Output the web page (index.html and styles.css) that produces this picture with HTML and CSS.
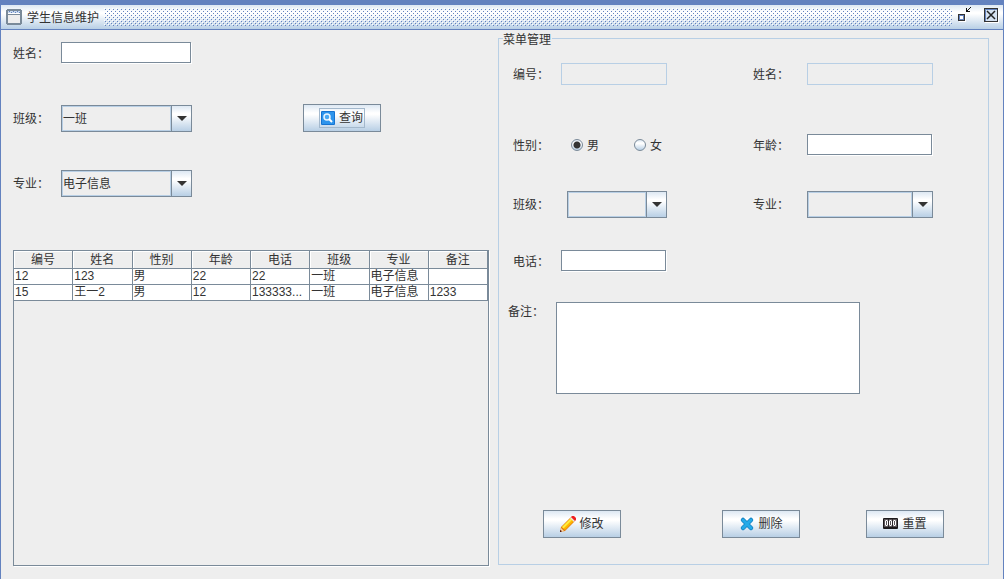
FILE: index.html
```html
<!DOCTYPE html>
<html lang="zh-CN">
<head>
<meta charset="utf-8">
<title>学生信息维护</title>
<link rel="stylesheet" href="styles.css">
</head>
<body>
<div class="window">
  <header class="titlebar">
    <svg class="frame-icon" width="16" height="16" viewBox="0 0 16 16" aria-hidden="true" shape-rendering="crispEdges">
      <path fill="#7a8a99" d="M1 0h14v1h1v14h-1v1H1v-1H0V1h1z"/>
      <path fill="#c8d9ee" d="M2 2h12v3H2z"/>
      <path fill="#6382bf" d="M3 2h1v1H3zM5 3h1v1H5zM7 2h1v1H7zM9 3h1v1H9zM11 2h1v1h-1zM13 3h1v1h-1z"/>
      <path fill="#fff" d="M2 4h12v1H2z"/>
      <path fill="#eee" d="M2 6h12v8H2z"/>
    </svg>
    <h1 class="title">学生信息维护</h1>
    <svg class="grip" width="100%" height="18" aria-hidden="true" shape-rendering="crispEdges">
      <defs>
        <pattern id="bumps" width="4" height="4" patternUnits="userSpaceOnUse">
          <path fill="#fff" d="M0 0h1v1H0zM2 2h1v1H2z"/>
          <path fill="#6382bf" d="M1 1h1v1H1zM3 3h1v1H3z"/>
        </pattern>
      </defs>
      <rect width="100%" height="18" fill="url(#bumps)"/>
    </svg>
    <button class="tool" type="button" aria-label="还原">
      <svg width="16" height="16" viewBox="0 0 16 16" shape-rendering="crispEdges">
        <path fill="#fff" d="M3 8h7v7H3z"/>
        <path fill="#333" d="M2 7h7v7H2z"/>
        <path fill="#6382bf" d="M3 8h5v5H3z"/>
        <path fill="#fff" d="M4 9h3v3H4z"/>
        <path fill="#111" d="M10 1h1v3h3v1h-4zM11 3h1v1h-1zM12 2h1v1h-1zM13 1h1v1h-1zM14 0h1v1h-1z"/>
      </svg>
    </button>
    <button class="tool" type="button" aria-label="关闭">
      <svg width="16" height="16" viewBox="0 0 16 16" shape-rendering="crispEdges">
        <path fill="#fff" d="M2 2h14v14H2z"/>
        <path fill="#333" d="M1 1h14v14H1z"/>
        <path fill="#6382bf" d="M2 2h12v12H2z"/>
        <path fill="#d5e2f0" d="M3 3h11v11H3z"/>
        <path stroke="#222" stroke-width="1.500" shape-rendering="auto" d="M4 4l8 8M12 4l-8 8"/>
      </svg>
    </button>
  </header>

  <main class="content">
    <section class="browse">
      <form class="filters">
        <label for="q-name">姓名：</label>
        <input class="text-field" id="q-name" type="text">
        <label class="second" for="q-class">班级：</label>
        <span class="combo"><select id="q-class"><option>一班</option></select></span>
        <button class="btn query" type="button"><span class="focus">
          <svg width="16" height="16" viewBox="0 0 16 16" aria-hidden="true">
            <rect x="1" y="1" width="14" height="14" rx="1" fill="#1673d1"/>
            <rect x="2" y="2" width="12" height="12" fill="#2d94ec"/>
            <circle cx="7" cy="7" r="3" fill="#4aa8f2" stroke="#e8f4ff" stroke-width="1.500"/>
            <path stroke="#fff" stroke-width="2" d="M9 9l3 3"/>
          </svg>查询</span></button>
        <label class="third" for="q-major">专业：</label>
        <span class="combo"><select id="q-major"><option>电子信息</option></select></span>
      </form>
      <div class="table-pane">
        <table>
          <thead>
            <tr><th>编号</th><th>姓名</th><th>性别</th><th>年龄</th><th>电话</th><th>班级</th><th>专业</th><th>备注</th></tr>
          </thead>
          <tbody>
            <tr><td>12</td><td>123</td><td>男</td><td>22</td><td>22</td><td>一班</td><td>电子信息</td><td></td></tr>
            <tr><td>15</td><td>王一2</td><td>男</td><td>12</td><td>133333...</td><td>一班</td><td>电子信息</td><td>1233</td></tr>
          </tbody>
        </table>
      </div>
    </section>

    <form class="editor">
      <fieldset>
        <legend>菜单管理</legend>
        <div class="sheet">
          <div class="row">
            <label for="e-id">编号：</label>
            <input class="text-field" id="e-id" type="text" disabled>
            <label class="right" for="e-name">姓名：</label>
            <input class="text-field" id="e-name" type="text" disabled>
          </div>
          <div class="row sex">
            <span class="caption" id="sex-label">性别：</span>
            <div class="radios" role="radiogroup" aria-labelledby="sex-label">
              <label><input type="radio" name="sex" checked>男</label>
              <label><input type="radio" name="sex">女</label>
            </div>
            <label class="right" for="e-age">年龄：</label>
            <input class="text-field" id="e-age" type="text">
          </div>
          <div class="row group">
            <label for="e-class">班级：</label>
            <span class="combo narrow"><select id="e-class"><option></option></select></span>
            <label class="right" for="e-major">专业：</label>
            <span class="combo"><select id="e-major"><option></option></select></span>
          </div>
          <div class="row phone">
            <label for="e-phone">电话：</label>
            <input class="text-field" id="e-phone" type="text">
          </div>
          <div class="note">
            <label for="e-note">备注：</label>
            <textarea id="e-note"></textarea>
          </div>
          <div class="actions">
            <button class="btn edit" type="button">
              <svg width="16" height="16" viewBox="0 0 16 16" aria-hidden="true">
                <path fill="#e07a10" d="M0 16l1-5L11 1l4 4L5 15z"/>
                <path fill="#ffb400" d="M2 11l9-9 3 3-9 9z"/>
                <path fill="#ffec3d" d="M2 11l9-9 1.500 1.500-9 9z"/>
                <path fill="#f8d8a8" d="M1 12l3 3-3 1H0z"/>
                <path fill="#5a1a10" d="M0 14l2 1-1 1H0z"/>
                <path fill="#e8e8e8" d="M10 2l1-1 4 4-1 1z"/>
                <path fill="#f02020" d="M11 1l1-1h2l2 2v2l-1 1z"/>
              </svg>修改</button>
            <button class="btn delete" type="button">
              <svg width="16" height="16" viewBox="0 0 16 16" aria-hidden="true">
                <path stroke="#137fc0" stroke-width="4.500" stroke-linecap="round" d="M4 4l8 8M12 4l-8 8"/>
                <path stroke="#25aae8" stroke-width="3" stroke-linecap="round" d="M4 4l8 8M12 4l-8 8"/>
              </svg>删除</button>
            <button class="btn reset" type="button">
              <svg width="16" height="16" viewBox="0 0 16 16" aria-hidden="true">
                <rect y="2" width="15" height="11" rx="1" fill="#1c1a1c"/>
                <path fill="#5a5458" d="M1 3h13v8H1z"/>
                <path fill="#2c282c" d="M5 3h1v8H5zM9 3h1v8H9z"/>
                <path fill="#fff" fill-rule="evenodd" d="M2 5l1-1h1l1 1v4l-1 1H3l-1-1zM3 5v4h1V5zM6 5l1-1h1l1 1v4l-1 1H7l-1-1zM7 5v4h1V5zM10 5l1-1h1l1 1v4l-1 1h-1l-1-1zM11 5v4h1V5z"/>
              </svg>重置</button>
          </div>
        </div>
      </fieldset>
    </form>
  </main>
</div>
</body>
</html>
```

FILE: styles.css
```css
:root {
  --blue: #6382bf;
  --light: #b8cfe5;
  --edge: #7a8a99;
  --face: #eeeeee;
  --ink: #333333;
  --metal: linear-gradient(#dde8f3, #ffffff 30%, #ffffff 36%, #b8cfe5);
}

* {
  box-sizing: border-box;
}

body {
  margin: 0;
  background: var(--face);
  color: var(--ink);
  font: 12px/16px "Liberation Sans", "Noto Sans CJK SC", sans-serif;
}

label,
.caption {
  font-family: "Noto Sans CJK SC", sans-serif;
}

input,
select,
textarea,
button {
  margin: 0;
  padding: 0;
  color: inherit;
  font: inherit;
  border-radius: 0;
}

svg {
  display: block;
  flex: none;
}

.window {
  display: flex;
  flex-direction: column;
  min-height: 100vh;
  border: solid var(--blue);
  border-width: 5px 1px 0;
}

/* Title bar */
.titlebar {
  display: flex;
  align-items: center;
  height: 25px;
  padding: 0 4px 0 5px;
  border-bottom: 1px solid var(--blue);
  background: var(--metal);
}

.title {
  margin: 0 5px 0 5px;
  padding-top: 2px;
  font-size: 12px;
  font-weight: normal;
  white-space: nowrap;
}

.grip {
  flex: 1;
  min-width: 0;
  margin-right: 4px;
}

.tool {
  width: 16px;
  height: 16px;
  margin-bottom: 4px;
  border: 0;
  background: none;
}

.tool + .tool {
  margin-left: 11px;
}

/* Two panes */
.content {
  flex: 1;
  display: grid;
  grid-template-columns: minmax(0, 476fr) minmax(0, 491fr);
  column-gap: 9px;
  padding: 0 14px 13px 12px;
}

.browse {
  display: flex;
  flex-direction: column;
  padding-top: 9px;
}

.filters {
  display: grid;
  grid-template-columns: 48px 131px 1fr;
  grid-auto-rows: 28px;
  row-gap: 37px;
  align-items: center;
  margin-bottom: 53px;
}

.second,
.third {
  grid-column: 1;
}

/* Fields */
.text-field {
  width: calc(100% - 1px);
  height: 21px;
  margin-bottom: 1px;
  padding: 0 2px;
  border: 1px solid var(--edge);
  background: #ffffff;
  box-shadow: 1px 1px #ffffff;
}

.text-field:disabled {
  width: 100%;
  height: 22px;
  margin: 0;
  border-color: var(--light);
  background: var(--face);
  box-shadow: none;
}

.combo {
  position: relative;
  align-self: end;
  height: 27px;
}

.combo select {
  display: block;
  width: 100%;
  height: 100%;
  padding: 0 20px 0 1px;
  appearance: none;
  border: 1px solid var(--edge);
  background: var(--face);
  box-shadow: inset 1px 1px var(--light), inset 0 -1px var(--light);
}

.combo::before {
  content: "";
  position: absolute;
  top: 1px;
  right: 1px;
  bottom: 1px;
  width: 20px;
  border-left: 1px solid var(--light);
  background: linear-gradient(90deg, var(--edge) 1px, transparent 1px) padding-box, var(--metal);
  background-repeat: no-repeat;
  pointer-events: none;
}

.combo::after {
  content: "";
  position: absolute;
  top: 11px;
  right: 5px;
  width: 10px;
  height: 5px;
  background: var(--ink);
  clip-path: polygon(0 0, 100% 0, 50% 100%);
  pointer-events: none;
}

.btn {
  display: flex;
  align-items: center;
  justify-content: center;
  gap: 3px;
  width: 78px;
  height: 28px;
  border: 1px solid var(--edge);
  background: var(--metal);
}

.query {
  justify-self: start;
  margin-left: 111px;
}

.focus {
  display: flex;
  align-items: center;
  gap: 3px;
  height: 20px;
  padding: 0 1px 0 0;
  border: 1px solid #a3b8cc;
}

/* Table */
.table-pane {
  flex: 1;
  border: 1px solid var(--edge);
  box-shadow: 1px 1px #ffffff;
}

table {
  width: 100%;
  table-layout: fixed;
  border-collapse: separate;
  border-spacing: 0;
}

th,
td {
  padding: 0;
  border: solid var(--edge);
  border-width: 0 1px 1px 0;
  overflow: hidden;
  white-space: nowrap;
}

th {
  height: 18px;
  padding-top: 1px;
  font-weight: normal;
  line-height: 16px;
  box-shadow: inset 1px 1px #ffffff;
}

td {
  height: 16px;
  padding-left: 1px;
  background: #ffffff;
  line-height: 15px;
}

/* Editor */
.editor {
  display: flex;
  padding: 1px 0;
}

fieldset {
  flex: 1;
  display: flex;
  min-width: 0;
  margin: 0;
  padding: 0;
  border: 1px solid var(--light);
}

legend {
  height: 15px;
  margin-left: 4px;
  padding: 0 1px 0 0;
  line-height: 18px;
}

.sheet {
  flex: 1;
  display: flex;
  flex-direction: column;
  padding: 14px 0 26px;
}

.row {
  display: grid;
  grid-template-columns: 48px 106px 1fr 54px 126px;
  align-items: center;
  height: 28px;
  margin: 0 55px 0 14px;
}

.right {
  grid-column: 4;
}

.sex {
  margin-top: 43px;
}

.group {
  margin-top: 31px;
}

.phone {
  margin-top: 29px;
}

.narrow {
  margin-left: 6px;
}

.radios {
  display: flex;
  gap: 35px;
  padding-left: 10px;
}

.radios label {
  display: flex;
  align-items: center;
  gap: 4px;
}

.radios input {
  width: 12px;
  height: 12px;
  appearance: none;
  border: 1px solid var(--edge);
  border-radius: 50%;
  background: var(--metal);
}

.radios input:checked {
  background: radial-gradient(circle, var(--ink) 3px, transparent 4px), var(--metal);
}

.note {
  display: flex;
  margin: 27px 128px 0 9px;
}

.note label {
  width: 48px;
  padding-top: 1px;
}

textarea {
  flex: 1;
  min-width: 0;
  height: 92px;
  border: 1px solid var(--edge);
  background: #ffffff;
  resize: none;
}

.actions {
  display: flex;
  margin-top: auto;
}

.edit {
  margin-left: 44px;
}

.delete {
  margin-left: 101px;
}

.reset {
  margin-left: 66px;
}
```
